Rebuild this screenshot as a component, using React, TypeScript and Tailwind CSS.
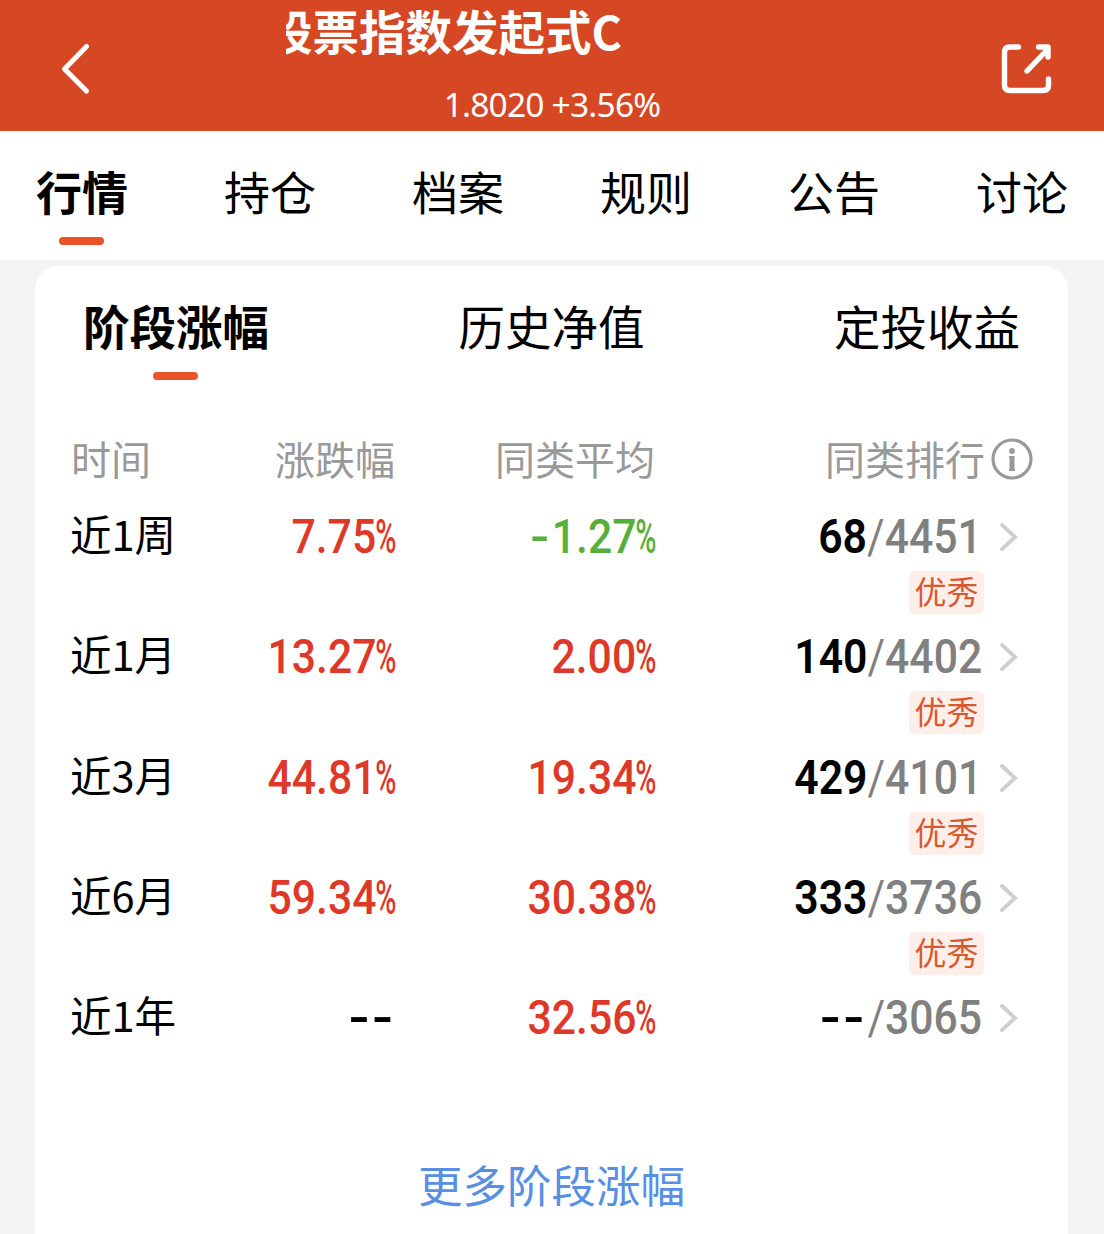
import { useState } from "react";

type Period = {
  label: string;
  change: string;
  average: string;
  rank: string;
  total: string;
  badge?: string;
};

const tabs = ["行情", "持仓", "档案", "规则", "公告", "讨论"];
const cardTabs = ["阶段涨幅", "历史净值", "定投收益"];

const periods: Period[] = [
  { label: "近1周", change: "7.75%", average: "-1.27%", rank: "68", total: "4451", badge: "优秀" },
  { label: "近1月", change: "13.27%", average: "2.00%", rank: "140", total: "4402", badge: "优秀" },
  { label: "近3月", change: "44.81%", average: "19.34%", rank: "429", total: "4101", badge: "优秀" },
  { label: "近6月", change: "59.34%", average: "30.38%", rank: "333", total: "3736", badge: "优秀" },
  { label: "近1年", change: "--", average: "32.56%", rank: "--", total: "3065" },
];

const numberFont = "font-['Roboto','Noto_Sans_CJK_SC',sans-serif]";

// "--" is drawn a little wider than the font's hyphens
const Dashes = () => (
  <span className="mr-px inline-block origin-right scale-x-[1.38] tracking-[1.5px]">--</span>
);

const Percent = ({ value }: { value: string }) => {
  if (value === "--") {
    return (
      <div
        className={`${numberFont} origin-right scale-x-[0.89] text-right text-[48px] font-semibold leading-[56px] text-black`}
      >
        <Dashes />
      </div>
    );
  }

  const negative = value.startsWith("-");

  return (
    <div
      className={`${numberFont} flex justify-end text-[48px] leading-[56px] ${
        negative ? "text-[#58ae3c]" : "text-[#de3829]"
      }`}
    >
      <span className="origin-right scale-x-[0.89] font-medium">
        {negative && <span className="mr-[3px] inline-block origin-right scale-x-[1.3]">-</span>}
        {value.replace("-", "").replace("%", "")}
      </span>
      <span className="-ml-[16px] origin-right scale-x-[0.6] font-medium">%</span>
    </div>
  );
};

const Chevron = () => (
  <svg width="18" height="28" viewBox="0 0 18 28" fill="none" className="shrink-0">
    <path d="M2 2L15 14L2 26" stroke="#cfcfcf" strokeWidth="3.8" strokeLinecap="round" />
  </svg>
);

const App = () => {
  const [activeTab, setActiveTab] = useState(0);
  const [activeCardTab, setActiveCardTab] = useState(0);

  return (
    <div className="h-[1234px] w-[1104px] overflow-hidden bg-[#f4f4f4] font-['Noto_Sans_CJK_SC',sans-serif] text-black">
      <header className="flex h-[131px] items-start bg-[#d64723] text-white">
        <button className="ml-[60px] mt-[42px] w-[226px]">
          <svg width="32" height="54" viewBox="0 0 32 54" fill="none">
            <path
              d="M26.5 4.5L4.5 27L26.5 49"
              stroke="currentColor"
              strokeWidth="5"
              strokeLinecap="round"
              strokeLinejoin="round"
            />
          </svg>
        </button>
        <div className="w-[532px] overflow-hidden">
          <h1 className="-ml-[20px] -mt-[3px] whitespace-nowrap text-[46.5px] font-bold leading-[66px]">
            股票指数发起式C
          </h1>
          <p className="mt-[20px] text-center font-['Noto_Sans',sans-serif] text-[33.5px] leading-[42px] tracking-[-0.8px]">
            1.8020 +3.56%
          </p>
        </div>
        <button className="ml-auto mr-[50px] mt-[42px]">
          <svg width="54" height="54" viewBox="0 0 54 54" fill="none">
            <path
              d="M18.500 5H10Q4.500 5 4.500 10.500V43Q4.500 48.500 10 48.500H43Q48.500 48.500 48.500 43V37M27 29L47 8M38.500 5H48V15"
              stroke="currentColor"
              strokeWidth="5.400"
              strokeLinecap="round"
              strokeLinejoin="round"
            />
          </svg>
        </button>
      </header>

      <nav className="flex h-[129px] items-start justify-between bg-white px-[36px] pt-[26px]">
        {tabs.map((tab, index) => (
          <button
            key={tab}
            onClick={() => setActiveTab(index)}
            className={`flex flex-col items-center text-[46px] leading-[66px] ${
              activeTab === index ? "font-bold" : "font-normal"
            }`}
          >
            {tab}
            {activeTab === index && (
              <span className="mr-px mt-[14px] h-2 w-[45px] rounded-full bg-[#e8532a]" />
            )}
          </button>
        ))}
      </nav>

      <main className="ml-[35px] mr-[36px] mt-1.5 h-[968px] rounded-t-[24px] bg-white">
        <div className="flex h-[160px] items-start justify-between px-[48px] pt-[26px]">
          {cardTabs.map((tab, index) => (
            <button
              key={tab}
              onClick={() => setActiveCardTab(index)}
              className={`flex flex-col items-center text-[46.5px] leading-[66px] ${
                activeCardTab === index ? "font-bold" : "font-normal"
              }`}
            >
              {tab}
              {activeCardTab === index && (
                <span className="mr-px mt-[14px] h-2 w-[45px] rounded-full bg-[#e8532a]" />
              )}
            </button>
          ))}
        </div>

        <div className="grid h-[68px] grid-cols-[150px_174px_260px_378px] items-start px-[36px] pt-[2px] text-[40px] leading-[60px] text-[#999999]">
          <span>时间</span>
          <span className="text-right">涨跌幅</span>
          <span className="text-right">同类平均</span>
          <div className="flex justify-end">
            同类排行
            <svg width="42" height="42" viewBox="0 0 42 42" fill="none" className="ml-1.5 mt-[10px]">
              <circle cx="21" cy="21" r="19" stroke="currentColor" strokeWidth="3.2" />
              <circle cx="21" cy="13" r="2.9" fill="currentColor" />
              <path d="M21 18V33" stroke="currentColor" strokeWidth="5" />
              <path d="M18 19H21M18 32H24" stroke="currentColor" strokeWidth="2" />
            </svg>
          </div>
        </div>

        {periods.map((period) => (
          <div
            key={period.label}
            className="grid h-[120.25px] grid-cols-[150px_175px_260px_362px] items-start px-[36px] pt-[15px]"
          >
            <span className="-ml-px -mt-[3px] text-[41.5px] leading-[54px]">{period.label}</span>
            <Percent value={period.change} />
            <Percent value={period.average} />
            <div>
              <div className="flex items-center justify-end">
                <div
                  className={`${numberFont} origin-right scale-x-[0.89] whitespace-nowrap text-[48px] font-medium leading-[56px] text-[#808080]`}
                >
                  <span className="font-semibold text-black">
                    {period.rank === "--" ? <Dashes /> : period.rank}
                  </span>
                  <span className="font-normal">/</span>
                  {period.total}
                </div>
                <span className="ml-[18px] flex">
                  <Chevron />
                </span>
              </div>
              {period.badge && (
                <div className="mr-[34px] mt-[6px] flex justify-end">
                  <span className="h-[43px] w-[75px] rounded-md bg-[#fdeee9] text-center text-[32px] leading-[39px] text-[#d9582f]">
                    {period.badge}
                  </span>
                </div>
              )}
            </div>
          </div>
        ))}

        <button className="mt-[56px] block w-full text-center text-[44.5px] leading-[66px] text-[#588fe5]">
          更多阶段涨幅
        </button>
      </main>
    </div>
  );
};

export default App;
